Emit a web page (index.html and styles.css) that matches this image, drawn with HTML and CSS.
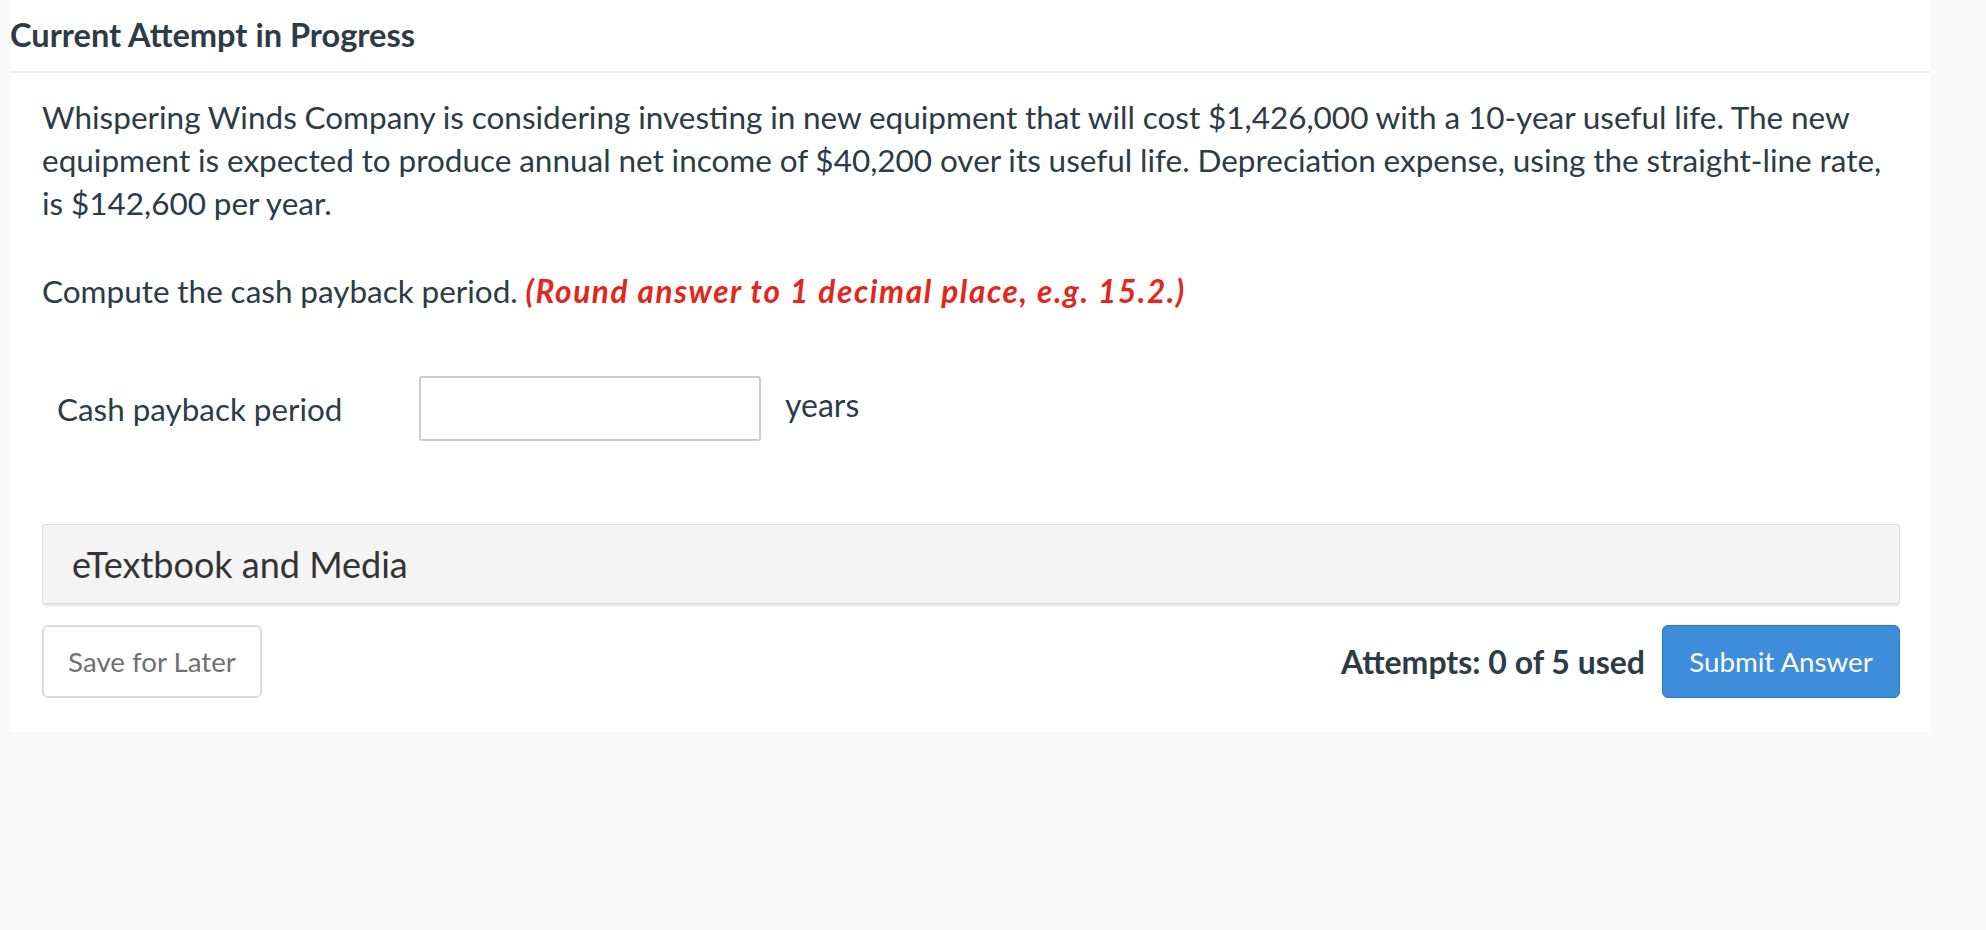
FILE: index.html
```html
<!DOCTYPE html>
<html>
<head>
<meta charset="utf-8">
<link rel="stylesheet" href="styles.css">
</head>
<body>
<div class="panel">
  <h2 class="title">Current Attempt in Progress</h2>
  <div class="content">
    <p class="question">Whispering Winds Company is considering investing in new equipment that will cost $1,426,000 with a 10-year useful life. The new equipment is expected to produce annual net income of $40,200 over its useful life. Depreciation expense, using the straight-line rate, is $142,600 per year.</p>
    <p class="question second">Compute the cash payback period. <span class="hint">(Round answer to 1 decimal place, e.g. 15.2.)</span></p>
    <div class="answer-row">
      <span class="label">Cash payback period</span>
      <input class="field" type="text">
      <span class="unit">years</span>
    </div>
    <div class="media">eTextbook and Media</div>
    <div class="actions">
      <button class="btn btn-save">Save for Later</button>
      <div class="right">
        <span class="attempts">Attempts: 0 of 5 used</span>
        <button class="btn btn-submit">Submit Answer</button>
      </div>
    </div>
  </div>
</div>
</body>
</html>
```
FILE: styles.css
```css
html, body {
  margin: 0;
  padding: 0;
  background: #f9f9f9;
}
body {
  font-family: Lato, "Open Sans", sans-serif;
  color: #2d3b45;
  padding-left: 10px;
}
.panel {
  width: 1920px;
  background: #ffffff;
  padding-bottom: 34px;
}
.title {
  margin: 0;
  font-size: 32.6px;
  font-weight: 700;
  line-height: 69px;
  height: 71px;
  border-bottom: 2px solid #ececec;
  color: #2d3b45;
}
.content {
  padding: 23px 30px 0 32px;
}
.question {
  margin: 0 -10px 0 0;
  font-size: 31.5px;
  line-height: 43px;
  word-spacing: -0.3px;
}
.question.second {
  margin-top: 45px;
}
.hint {
  color: #e3261c;
  font-weight: 700;
  font-style: italic;
  letter-spacing: 1.6px;
  word-spacing: 0;
}
.answer-row {
  display: flex;
  align-items: center;
  margin-top: 63px;
  padding-left: 15px;
  height: 65px;
}
.label {
  width: 362px;
  font-size: 31.4px;
}
.field {
  box-sizing: border-box;
  width: 342px;
  height: 65px;
  border: 2px solid #cccccc;
  border-radius: 3px;
  margin: 0;
  padding: 0 10px;
  font-family: inherit;
  font-size: 28px;
}
.unit {
  margin-left: 24px;
  font-size: 32px;
  position: relative;
  top: -4px;
}
.media {
  box-sizing: border-box;
  margin-top: 83px;
  height: 81px;
  background: #f4f4f4;
  border: 1px solid #dddddd;
  border-bottom: 2px solid #dcdcdc;
  border-radius: 4px;
  box-shadow: 0 2px 2px rgba(0,0,0,0.06);
  padding-left: 29px;
  display: flex;
  align-items: center;
  font-size: 36px;
  color: #333333;
}
.actions {
  margin-top: 20px;
  display: flex;
  justify-content: space-between;
  align-items: center;
}
.right {
  display: flex;
  align-items: center;
  gap: 17px;
}
.btn {
  box-sizing: border-box;
  height: 73px;
  font-family: inherit;
  font-size: 27.7px;
  border-radius: 6px;
  cursor: pointer;
}
.btn-save {
  width: 220px;
  background: #ffffff;
  border: 2px solid #dcdcdc;
  color: #707070;
}
.btn-submit {
  width: 238px;
  background: #3d8ddb;
  border: 1px solid #2f78c4;
  color: #ffffff;
}
.attempts {
  font-size: 32px;
  font-weight: 700;
  color: #2d3b45;
}
```
